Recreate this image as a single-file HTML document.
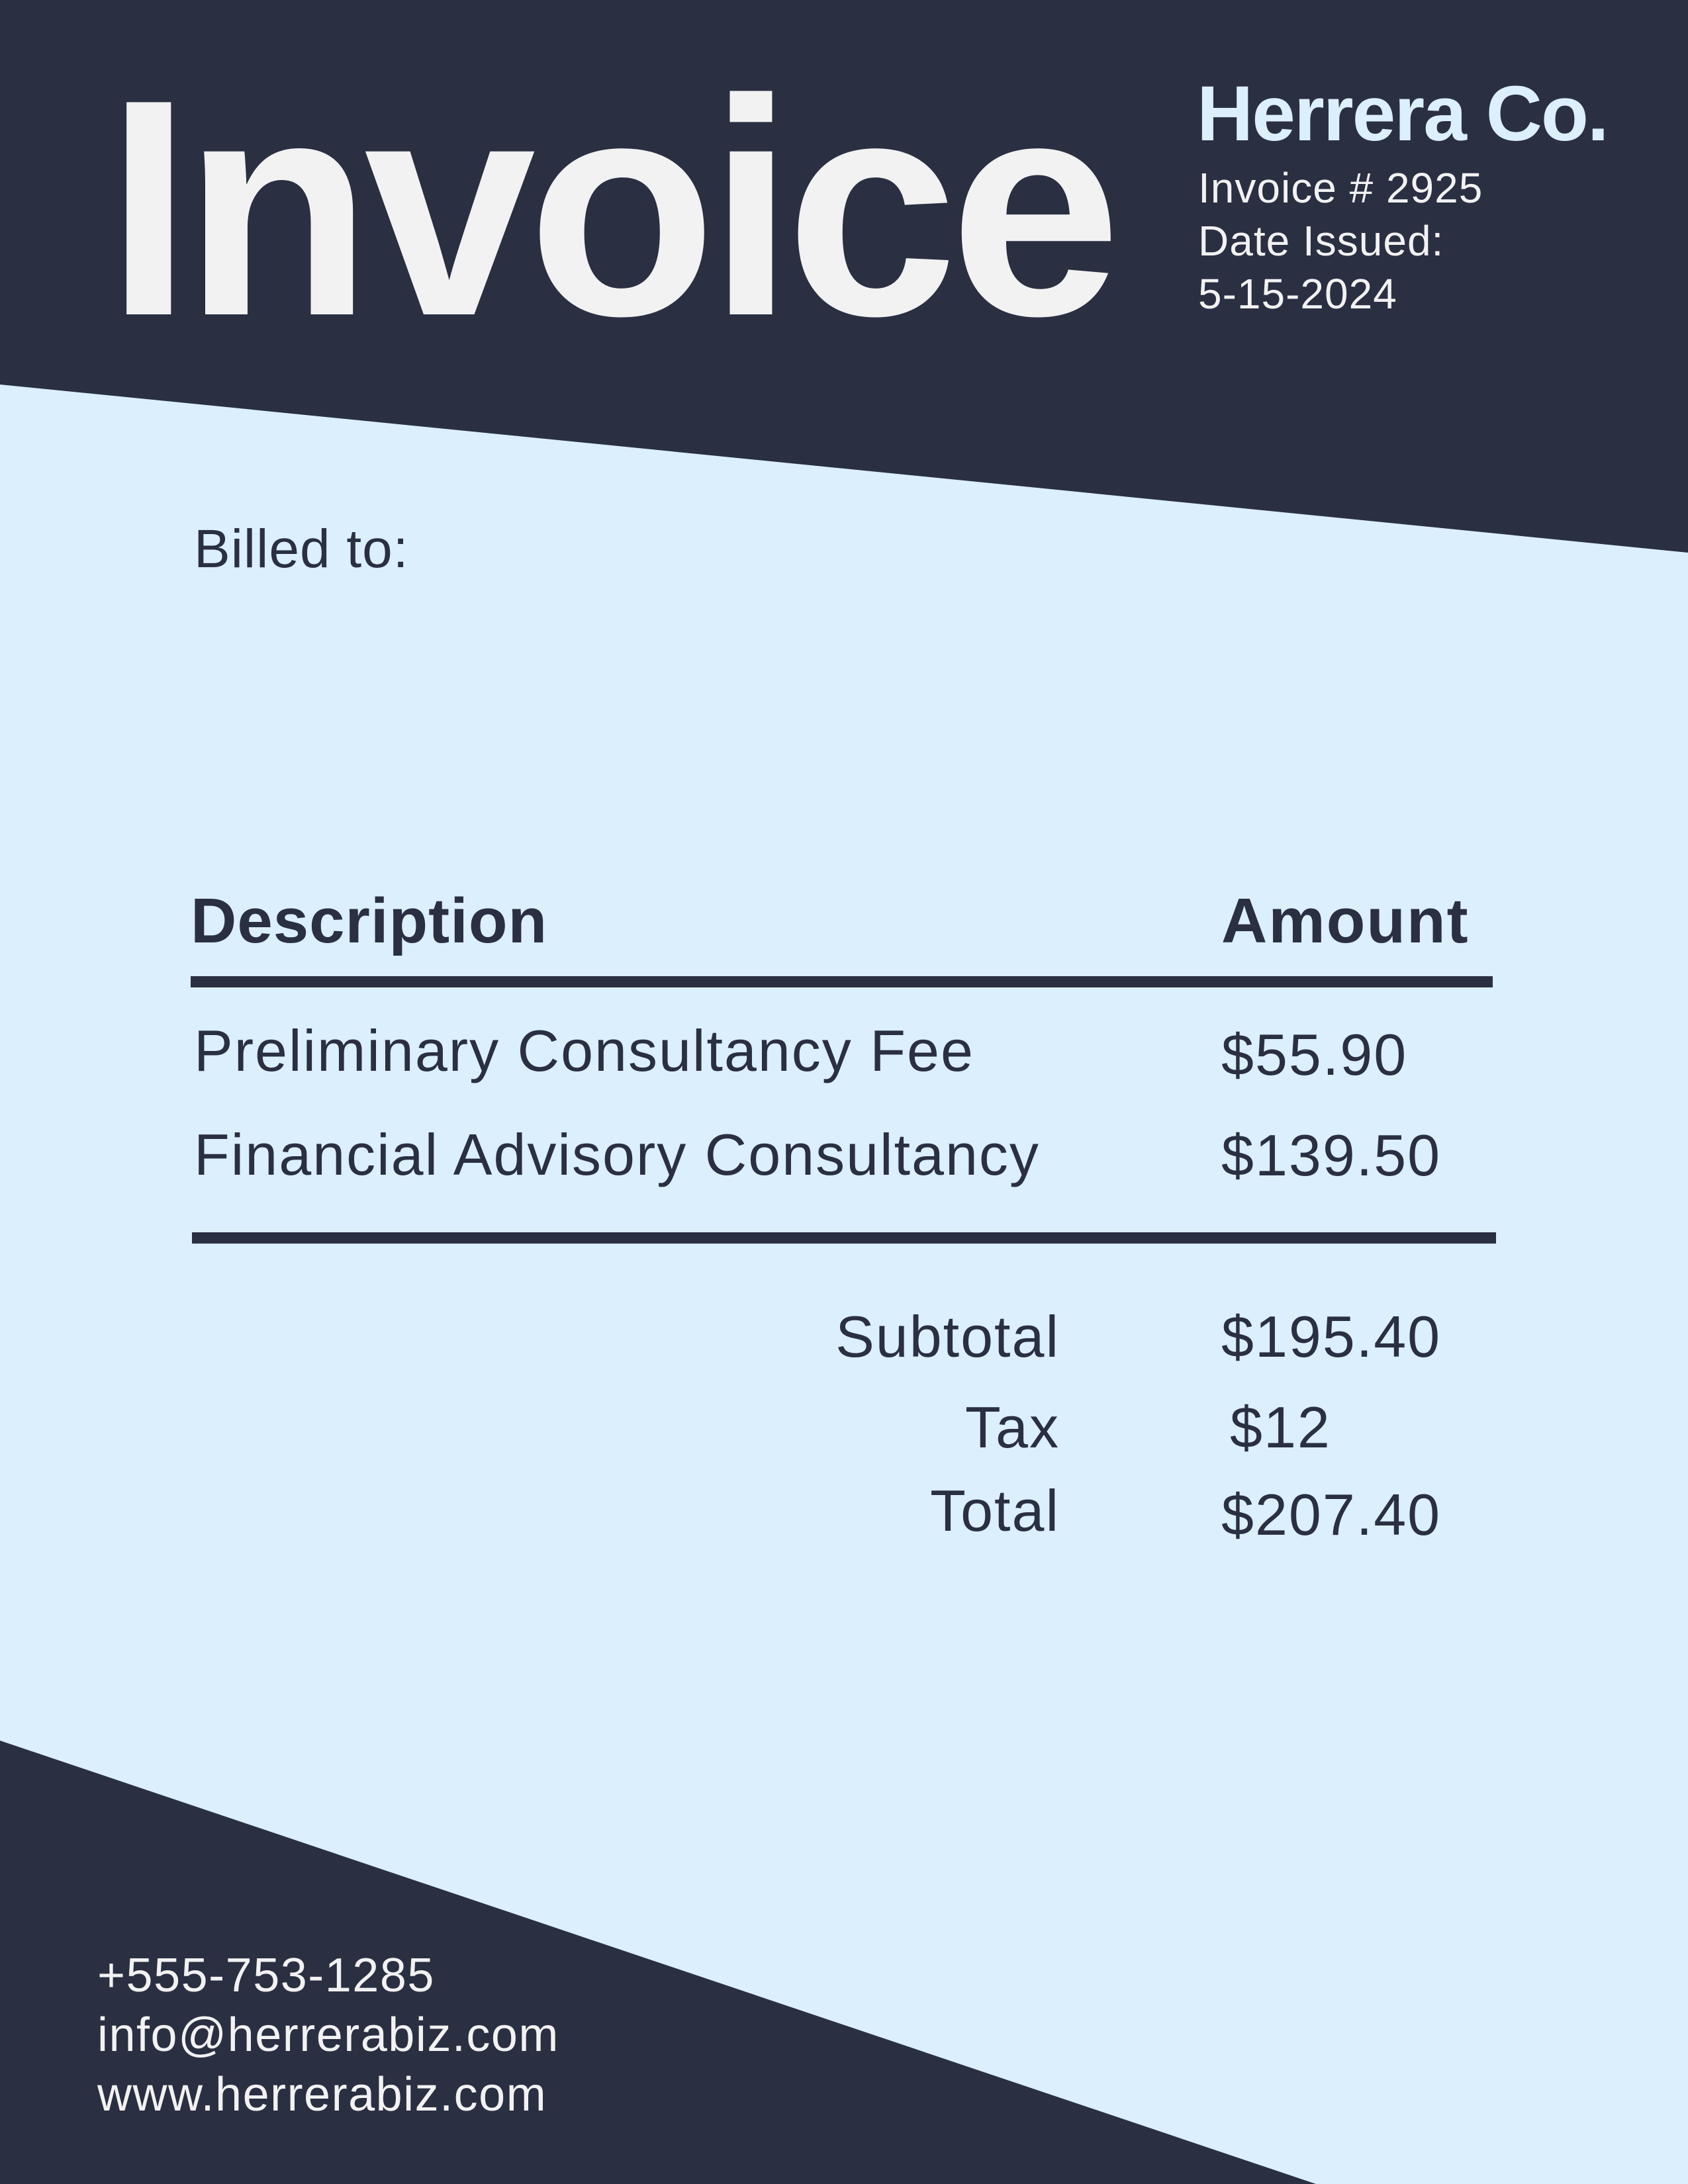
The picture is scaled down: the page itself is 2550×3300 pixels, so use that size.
<!DOCTYPE html>
<html><head><meta charset="utf-8"><style>
*{margin:0;padding:0}
body{width:2550px;height:3300px;position:relative;background:#dbeffd;overflow:hidden;font-family:"Liberation Sans",sans-serif;color:#2a2f42}
svg{position:absolute;left:0;top:0}
.t{position:absolute;white-space:nowrap;line-height:1}
</style></head><body>
<svg width="2550" height="3300"><polygon points="0,0 2550,0 2550,835 0,581" fill="#2a2f42"/><polygon points="0,2630 1988,3300 0,3300" fill="#2a2f42"/>
<rect x="288" y="1475" width="1967" height="17" fill="#2a2f42"/><rect x="290" y="1862" width="1970" height="17" fill="#2a2f42"/></svg>
<div class="t" style="left:160px;top:146px;font-size:466px;font-weight:bold;color:#f2f2f2;letter-spacing:-12px;line-height:0.72">Invoice</div>
<div class="t" style="left:1808px;top:130px;font-size:118px;font-weight:bold;color:#dbeffd;line-height:0.72;letter-spacing:-2px">Herrera Co.</div>
<div class="t" style="left:1810px;top:244px;font-size:64px;color:#f2f2f2;line-height:80px;letter-spacing:1px">Invoice # 2925<br>Date Issued:<br>5-15-2024</div>
<div class="t" style="left:293px;top:789px;font-size:82px;letter-spacing:1px">Billed to:</div>
<div class="t" style="left:288px;top:1344px;font-size:96px;font-weight:bold;letter-spacing:1px">Description</div>
<div class="t" style="left:1845px;top:1344px;font-size:96px;font-weight:bold;letter-spacing:2px">Amount</div>
<div class="t" style="left:293px;top:1544px;font-size:88px;letter-spacing:2px">Preliminary Consultancy Fee</div>
<div class="t" style="left:1845px;top:1550px;font-size:88px;letter-spacing:2px">$55.90</div>
<div class="t" style="left:293px;top:1701px;font-size:88px;letter-spacing:2px">Financial Advisory Consultancy</div>
<div class="t" style="left:1845px;top:1702px;font-size:88px;letter-spacing:2px">$139.50</div>
<div class="t" style="right:949px;top:1976px;font-size:88px;letter-spacing:2px">Subtotal</div>
<div class="t" style="left:1845px;top:1976px;font-size:88px;letter-spacing:2px">$195.40</div>
<div class="t" style="right:949px;top:2113px;font-size:88px;letter-spacing:2px">Tax</div>
<div class="t" style="left:1858px;top:2113px;font-size:88px;letter-spacing:2px">$12</div>
<div class="t" style="right:949px;top:2239px;font-size:88px;letter-spacing:2px">Total</div>
<div class="t" style="left:1845px;top:2245px;font-size:88px;letter-spacing:2px">$207.40</div>
<div class="t" style="left:147px;top:2940px;font-size:72px;color:#f2f2f2;line-height:90px;letter-spacing:1.5px">+555-753-1285<br>info@herrerabiz.com<br>www.herrerabiz.com</div>
</body></html>
